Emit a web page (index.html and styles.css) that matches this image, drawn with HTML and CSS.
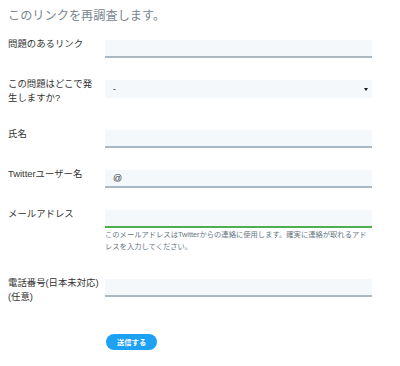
FILE: index.html
```html
<!DOCTYPE html>
<html lang="ja">
<head>
  <meta charset="UTF-8">
  <meta name="viewport" content="width=device-width, initial-scale=1.0">
  <title>再調査</title>
  <link rel="stylesheet" href="styles.css">
</head>
<body>
  <h1 class="title">このリンクを再調査します。</h1>
  <form class="form">
    <div class="row">
      <label class="label" for="link">問題のあるリンク</label>
      <div class="field">
        <input class="input" id="link" type="text">
      </div>
    </div>

    <div class="row">
      <label class="label" for="where">この問題はどこで発生しますか?</label>
      <div class="field">
        <div class="select-wrap">
          <select class="select" id="where">
            <option>-</option>
          </select>
        </div>
      </div>
    </div>

    <div class="row">
      <label class="label" for="fullname">氏名</label>
      <div class="field">
        <input class="input" id="fullname" type="text">
      </div>
    </div>

    <div class="row">
      <label class="label" for="twitter">Twitterユーザー名</label>
      <div class="field">
        <input class="input" id="twitter" type="text" value="@">
      </div>
    </div>

    <div class="row">
      <label class="label" for="email">メールアドレス</label>
      <div class="field">
        <input class="input input-valid" id="email" type="email">
        <p class="help">このメールアドレスはTwitterからの連絡に使用します。確実に連絡が取れるアドレスを入力してください。</p>
      </div>
    </div>

    <div class="row">
      <label class="label" for="phone"><span class="nowrap">電話番号(日本未対応)</span><span class="optional">(任意)</span></label>
      <div class="field">
        <input class="input" id="phone" type="tel">
      </div>
    </div>

    <div class="actions">
      <button class="submit" type="button">送信する</button>
    </div>
  </form>
</body>
</html>
```

FILE: styles.css
```css
body {
  font-family: "Liberation Sans", "Noto Sans CJK JP", sans-serif;
  background: #fff;
  color: #333;
  margin: 0;
  padding: 8px;
}
.title {
  font-size: 12.2px;
  font-weight: normal;
  line-height: 16px;
  color: #7a868e;
  margin: 0 0 16px 0;
}
.row {
  display: flex;
  align-items: flex-start;
  margin-bottom: 22px;
}
.label {
  width: 90px;
  flex-shrink: 0;
  margin: -3px 7px 4px 0;
  font-size: 9.4px;
  line-height: 13.5px;
  color: #333;
}
.nowrap {
  white-space: nowrap;
}
.optional {
  display: block;
}
.field {
  width: 267px;
}
.input, .select {
  display: block;
  width: 100%;
  height: 18px;
  box-sizing: border-box;
  margin: 0;
  padding: 0 8px;
  border: 0;
  border-bottom: 2px solid #aab8c2;
  border-radius: 0;
  background: #f5f8fa;
  font-family: inherit;
  font-size: 9px;
  color: #333;
  outline: none;
}
.input-valid {
  border-bottom-color: #4caf50;
}
.select-wrap {
  position: relative;
}
.select {
  appearance: none;
  -webkit-appearance: none;
  border-bottom: 0;
}
.select-wrap::after {
  content: "";
  position: absolute;
  right: 4px;
  top: 8px;
  border-left: 2px solid transparent;
  border-right: 2px solid transparent;
  border-top: 3px solid #14171a;
}
.help {
  margin: 1px 0 4px 0;
  font-size: 7.3px;
  line-height: 12px;
  color: #66757f;
}
.actions {
  padding-left: 98px;
  padding-top: 2px;
}
.submit {
  height: 16px;
  padding: 0 11px;
  border: 0;
  border-radius: 8px;
  background: #1da1f2;
  color: #fff;
  font-family: inherit;
  font-size: 7.3px;
  font-weight: bold;
  cursor: pointer;
}
```
